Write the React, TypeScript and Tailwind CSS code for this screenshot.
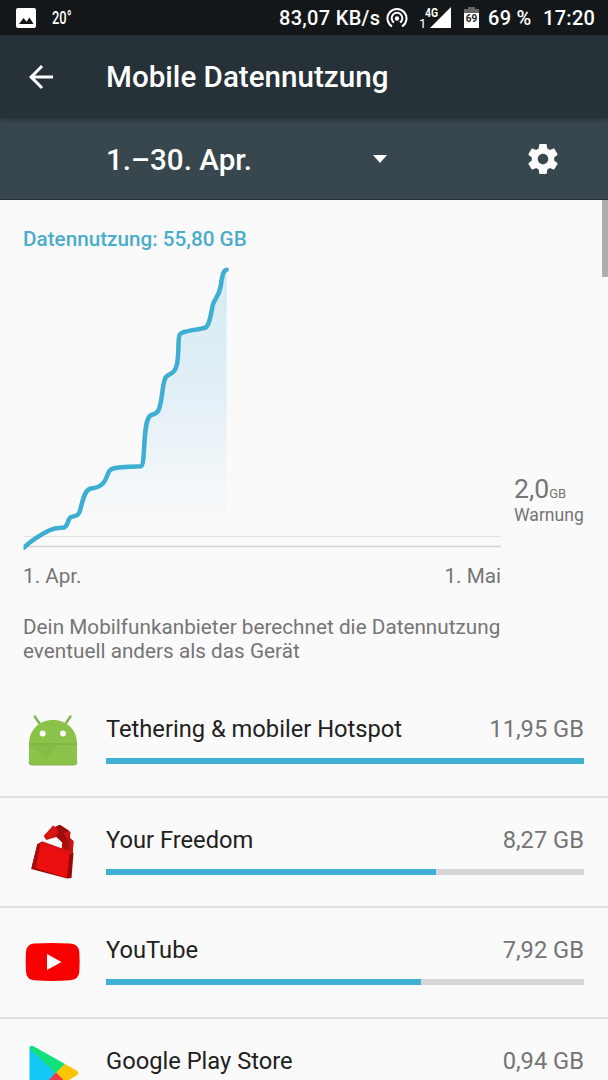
import React from 'react';

interface AppUsage {
  name: string;
  amount: string;
  percent: number;
  icon: React.ReactNode;
}

const AndroidIcon = () => (
  <svg width="56" height="56" viewBox="24 713.5 56 56">
    <path d="M34.700 717l5.500 8M70.500 717l-5.500 8" stroke="#83b552" strokeWidth="2.4" strokeLinecap="round" />
    <path d="M29 744.500c0-14 10-24 24-24s24 10 24 24z" fill="#8bc34a" />
    <path d="M29 744h48v18.500q0 3-3 3H32q-3 0-3-3z" fill="#8bc34a" />
    <path d="M31 745h27L46 760z" fill="#7cb342" opacity="0.45" />
    <path d="M29 744.500h48" stroke="#79a944" strokeWidth="1" />
    <path d="M29 762.500q0 3 3 3H74q3 0 3-3" fill="none" stroke="#7aa648" strokeWidth="0.8" />
    <circle cx="42.700" cy="734" r="3" fill="#fafafa" />
    <circle cx="63" cy="734" r="3" fill="#fafafa" />
  </svg>
);

const LockIcon = () => (
  <svg width="56" height="60" viewBox="24 821.5 56 60">
    <path d="M43.700 835.500L53 825l2.500 1.500L59 824.500l2.500 1.500 9 5.500-.5 6 3.500 3-.8 11.500-11-3.500.5-6.500-6-5.500-10 3z" fill="#cf1414" />
    <path d="M55.500 826.500l3.500 5-3 3.500 7 7.500 4-4-3.500-6 6-2-9-6-1.500 0z" fill="#9c0c0c" />
    <path d="M45 834.500l8.500-9 4.500 6-4 3.500-6 1.500z" fill="#d81616" />
    <path d="M62.500 843l7-5.500 3.500 3.500-4 10.500-7-2.500z" fill="#a80f0f" />
    <path d="M69.500 838l4 3-.8 11-4.700-1.500z" fill="#c91212" />
    <path d="M37.500 843.500L42 841l31.500 11.500-2 25-4.500.5L31.300 868.500z" fill="#9a0808" />
    <path d="M39.500 843.500l30 9.500-2.500 24.500L35 867.500z" fill="#ec0f10" />
    <path d="M39.500 843.500l3-2.500L73.500 852l-4.500 2z" fill="#d91313" />
    <path d="M37.300 843.500l3 .5-4.500 24.500-4.500-.5z" fill="#a80b0b" />
  </svg>
);

const YouTubeIcon = () => (
  <svg width="56" height="40" viewBox="0 0 56 40">
    <path d="M10 1.500Q28 .3 46 1.500q8.800 .8 9.300 8.500.7 10 0 20-.5 7.500-9.300 8.300-18 1.200-36 0Q2.500 37.500 2 30q-.7-10 0-20 .5-7.700 8-8.500z" fill="#f90000" />
    <path d="M23 12l14.500 8L23 28z" fill="#fff" />
  </svg>
);

const PlayIcon = () => (
  <svg width="56" height="58" viewBox="24 1043.5 56 58">
    <path d="M29.500 1047.500L57 1072l-27.500 28z" fill="#14c8f5" />
    <path d="M29.500 1047.500q0-3.500 4-1.800L65 1063.500l-9 9.500-26.500-25z" fill="#12e07a" />
    <path d="M65 1063.500l11.500 6.500q3.500 2.500 0 5L65 1082l-10-9z" fill="#fcc404" />
    <path d="M56 1072L66 1082l-33 19-3.500-1z" fill="#ee3a4a" />
  </svg>
);

const usages: AppUsage[] = [
  { name: 'Tethering & mobiler Hotspot', amount: '11,95 GB', percent: 100, icon: <AndroidIcon /> },
  { name: 'Your Freedom', amount: '8,27 GB', percent: 69, icon: <LockIcon /> },
  { name: 'YouTube', amount: '7,92 GB', percent: 66, icon: <YouTubeIcon /> },
  { name: 'Google Play Store', amount: '0,94 GB', percent: 8, icon: <PlayIcon /> },
];

const curve =
  'M24 547.500C34 538 42 534 49 530.500C56 527 60 528 64 527.500C69 526 67 519 71 517C74 515 77 518 79.500 512C82 506 83 490 91 488.500C106 487 106 477 109 471.500C112 466 126 467.500 141 466.300C146 464 142 421 150.500 415.500C153 413.500 157 415 159 409C163 398 162 382 166 377C170 373 175 374 177 364C179 353 178 343 179 337C179.500 333 181 333.500 184 332C191 330 200 329.500 206 327.300C211 323 211 309 213.500 303C216 298 219 295 220.500 287C222 279 222.500 270 226.700 269.700';

const StatusBar: React.FC = () => (
  <div className="h-[35px] shrink-0 bg-[#14171a] text-white flex items-center">
    <svg width="20" height="20" viewBox="0 0 20 20" className="ml-4">
      <path d="M2 0h16q2 0 2 2v16q0 2-2 2H2q-2 0-2-2V2Q0 0 2 0z" fill="#fff" />
      <path d="M3 16l4.500-6 3 3.800L13.500 9.500 17.500 16z" fill="#14171a" />
    </svg>
    <div className="ml-4 mt-0.5 w-[22px] text-[19px] font-medium"><span className="inline-block origin-left scale-x-[0.68]">20°</span></div>
    <div className="ml-auto text-[20px] font-medium tracking-[0.3px] whitespace-nowrap w-[101px] mt-px">83,07 KB/s</div>
    <svg width="22" height="22" viewBox="0 0 22 22" className="ml-[6px] mt-px" fill="none" stroke="#fff" strokeWidth="2">
      <path d="M6 19.500a9.500 9.500 0 1 1 10 0M8 15.500a5.300 5.300 0 1 1 6 0" />
      <circle cx="11" cy="11.500" r="2.200" fill="#fff" stroke="none" />
    </svg>
    <div className="relative ml-[11px] w-8 h-[22px]">
      <span className="absolute left-0 top-[10px] text-[13px] leading-none">1</span>
      <span className="absolute left-[6px] -top-px text-[13px] leading-none font-bold origin-left scale-x-[0.8] z-10">4G</span>
      <svg width="32" height="22" viewBox="0 0 32 22"><path d="M32 0v21H11z" fill="#fff" /></svg>
    </div>
    <svg width="15" height="21" viewBox="0 0 15 21" className="ml-[13px]">
      <path d="M4 0h7v2h4v5H0V2h4z" fill="#666" />
      <path d="M0 6h15v15H0z" fill="#fff" />
      <text x="7.500" y="14.500" textAnchor="middle" fontSize="10" fontWeight="700" fill="#222">69</text>
    </svg>
    <div className="ml-[9px] w-[43px] text-[20px] font-medium tracking-[0.3px] whitespace-nowrap mt-px">69 %</div>
    <div className="ml-3 w-[53px] mr-3 text-[20px] font-medium tracking-[0.3px] mt-px">17:20</div>
  </div>
);

const UsageRow: React.FC<{ usage: AppUsage }> = ({ usage }) => (
  <div className="h-[110.5px] shrink-0 flex items-center border-b-2 border-[#e0e0e0] pr-6">
    <div className="w-[106px] pl-6 flex items-center">{usage.icon}</div>
    <div className="flex-1 pb-[3.500px]">
      <div className="flex justify-between text-[23.7px] leading-7 whitespace-nowrap">
        <span className="text-[#212121]">{usage.name}</span>
        <span className="text-[#757575]">{usage.amount}</span>
      </div>
      <div className="mt-[15px] h-1.5 bg-[#d6d6d6]">
        <div className="h-full bg-[#3eb1d5]" style={{ width: `${usage.percent}%` }} />
      </div>
    </div>
  </div>
);

const App: React.FC = () => {
  return (
    <div className="relative w-[608px] h-[1080px] overflow-hidden bg-[#fafafa] font-['Roboto',sans-serif] flex flex-col">
      <StatusBar />

      <header className="relative z-10 h-[83px] shrink-0 bg-[#263138] text-white flex items-center shadow-[0_2px_4px_rgba(0,0,0,0.3)]">
        <svg width="36" height="36" viewBox="0 0 24 24" className="ml-[23px]">
          <path d="M20 11H7.830l5.590-5.590L12 4l-8 8 8 8 1.410-1.410L7.830 13H20z" fill="#fff" />
        </svg>
        <h1 className="ml-[47px] mt-[3px] text-[29.6px] font-medium leading-none">Mobile Datennutzung</h1>
      </header>

      {/* Billing cycle */}
      <div className="h-[82px] shrink-0 bg-[#38474e] text-white flex items-center border-b border-[#263138]">
        <span className="ml-[106px] w-[266px] mt-[5px] text-[29.6px] font-medium leading-none">1.–30. Apr.</span>
        <svg width="16" height="9" viewBox="0 0 16 9" className="mt-0.5"><path d="M1 0h14L8 8z" fill="#fff" /></svg>
        <svg width="36" height="36" viewBox="0 0 24 24" className="ml-[137px]">
          <path d="M19.430 12.980c.04-.32.07-.64.07-.98s-.03-.66-.07-.98l2.110-1.650c.19-.15.24-.42.12-.64l-2-3.460c-.12-.22-.39-.3-.61-.22l-2.490 1c-.52-.4-1.080-.73-1.690-.98l-.38-2.650C14.460 2.180 14.250 2 14 2h-4c-.25 0-.46.18-.49.42l-.38 2.650c-.61.25-1.170.59-1.690.98l-2.490-1c-.23-.09-.49 0-.61.22l-2 3.460c-.13.22-.07.49.12.64l2.110 1.650c-.04.32-.07.65-.07.98s.03.66.07.98l-2.110 1.650c-.19.15-.24.42-.12.64l2 3.460c.12.22.39.3.61.22l2.490-1c.52.4 1.080.73 1.690.98l.38 2.650c.03.24.24.42.49.42h4c.25 0 .46-.18.49-.42l.38-2.650c.61-.25 1.170-.59 1.690-.98l2.490 1c.23.09.49 0 .61-.22l2-3.460c.12-.22.07-.49-.12-.64l-2.110-1.650zM12 15.500c-1.930 0-3.500-1.570-3.500-3.500s1.570-3.500 3.500-3.500 3.500 1.570 3.500 3.500-1.570 3.500-3.500 3.500z" fill="#fff" />
        </svg>
      </div>

      <h2 className="mt-[27px] ml-[23px] h-6 leading-6 text-[20.7px] font-medium text-[#4aadca]">Datennutzung: 55,80 GB</h2>

      {/* Chart */}
      <div className="mt-[11px] flex h-[290px] shrink-0">
        <svg width="502" height="290" viewBox="0 262 502 290">
          <defs>
            <linearGradient id="usageFill" x1="0" y1="269" x2="0" y2="530" gradientUnits="userSpaceOnUse">
              <stop offset="0" stopColor="#3eb1d5" stopOpacity="0.2" />
              <stop offset="0.5" stopColor="#3e9fe0" stopOpacity="0.12" />
              <stop offset="1" stopColor="#3eb1d5" stopOpacity="0" />
            </linearGradient>
            <clipPath id="plotArea">
              <path d="M23.500 262H502V552H23.500z" />
            </clipPath>
          </defs>
          <path d="M24 536.500H501" stroke="#e3e3e3" strokeWidth="1" />
          <path d="M24 546.500H501" stroke="#d2d2d2" strokeWidth="1.300" />
          <path d={`${curve}V547.500H24z`} fill="url(#usageFill)" />
          <path d={curve} fill="none" stroke="#3eaed2" strokeWidth="4.500" strokeLinecap="round" strokeLinejoin="round" clipPath="url(#plotArea)" />
        </svg>
        <div className="ml-3 mt-[212px] text-[#757575]">
          <div className="text-[26.6px] leading-[30px] whitespace-nowrap">2,0<span className="text-[13px]">GB</span></div>
          <div className="-mt-[5px] text-[17.6px] leading-[22px]">Warnung</div>
        </div>
      </div>
      <div className="mt-3 ml-[23px] w-[478px] flex justify-between text-[20.7px] leading-6 text-[#757575]">
        <span>1. Apr.</span>
        <span>1. Mai</span>
      </div>

      <p className="mt-[27px] ml-[23px] text-[20.7px] leading-6 text-[#757575] tracking-[0.02px] whitespace-nowrap">
        Dein Mobilfunkanbieter berechnet die Datennutzung<br />eventuell anders als das Gerät
      </p>

      <div className="mt-[24px]">
        {usages.map((usage) => (
          <UsageRow key={usage.name} usage={usage} />
        ))}
      </div>

      {/* Scrollbar thumb */}
      <div className="absolute right-0 top-[200px] w-1.5 h-[77px] bg-[#adadad]" />
    </div>
  );
};

export default App;
